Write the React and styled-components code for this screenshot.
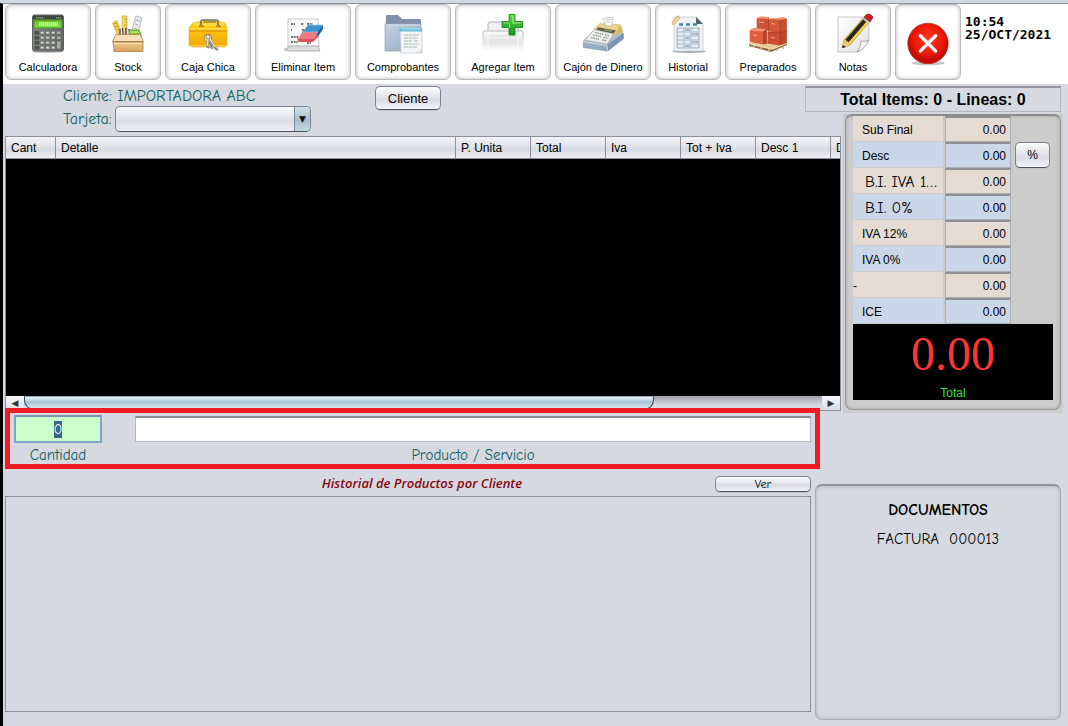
import React, { useState } from 'react'
import styled, { createGlobalStyle } from 'styled-components'

const sans = '"Liberation Sans", Arial, sans-serif'
const comic = '"Comic Sans MS", "Comic Neue", "Open Sans", sans-serif'

const GlobalStyles = createGlobalStyle`
    * {
        box-sizing: border-box;
    }
    body {
        margin: 0;
        background: #d6d9e0;
        font-family: ${sans};
        font-size: 12px;
        color: #000;
    }
    button, input, select {
        font-family: inherit;
        font-size: inherit;
        color: inherit;
    }
`
const Pagina = styled.div`
    display: flex;
    flex-direction: column;
    min-height: 100vh;
    border-top: 3px solid #d3d7e2;
`
const Ventana = styled.div`
    flex: 1;
    display: flex;
    flex-direction: column;
    border-left: 3px solid #000;
    border-top: 1px solid #8d929e;
`
const Barra = styled.header`
    display: flex;
    gap: 4px;
    height: 80px;
    padding-left: 2px;
    background: #fff;
`
const BotonBarra = styled.button`
    display: flex;
    flex-direction: column;
    align-items: center;
    justify-content: ${p => p.$centrado ? 'center' : 'flex-start'};
    gap: 4px;
    width: ${p => p.$ancho}px;
    height: 76px;
    padding: ${p => p.$centrado ? '4px 0 0' : '8px 0 0'};
    border: 1px solid #b9b9b9;
    border-radius: 6px;
    background: #fff;
    box-shadow: inset 0 0 4px #b4b4b4;
    font-size: 11px;
    line-height: 16px;
    white-space: nowrap;
`
const Reloj = styled.time`
    padding: 11px 0 0;
    font: bold 13px/13px "DejaVu Sans Mono", monospace;
`
const Superior = styled.main`
    display: grid;
    grid-template-columns: minmax(0, 1fr) 36px 220px;
    grid-template-rows: 30px 22px 275px;
    padding: 0 7px 0 2px;
`
const Cliente = styled.section`
    grid-column: 1;
    grid-row: 1 / 3;
    display: flex;
    align-items: flex-start;
    padding: 2px 0 0 58px;
    font-family: ${comic};
    font-size: 16px;
    color: #0c6162;
`
const DatosCliente = styled.div`
    width: 248px;
    margin-right: 64px;
`
const Linea = styled.div`
    display: flex;
    align-items: center;
    justify-content: space-between;
    height: ${p => p.$alto}px;
    white-space: nowrap;
`
const Combo = styled.div`
    position: relative;
    width: 196px;
    height: 26px;
    border: 1px solid #7d838f;
    border-bottom-color: #4b525e;
    border-radius: 5px;
    overflow: hidden;
    background: linear-gradient(#f8f9fb, #e3e5ea 45%, #dbdee5 60%, #eef0f4);
`
const Selector = styled.select`
    width: 100%;
    height: 100%;
    border: 0;
    appearance: none;
    background: transparent;
`
const Flecha = styled.span`
    position: absolute;
    top: 0;
    right: 0;
    width: 16px;
    height: 24px;
    border-left: 1px solid #75879b;
    background: linear-gradient(#d3dfe9, #a9bfd1 55%, #c5d5e2);
    color: #111;
    font: 9px/24px "DejaVu Sans", sans-serif;
    text-align: center;
    pointer-events: none;
`
const Boton = styled.button`
    width: ${p => p.$ancho}px;
    height: ${p => p.$alto}px;
    padding: 0;
    border: 1px solid #7d838f;
    border-bottom-color: #4b525e;
    border-radius: 5px;
    background: linear-gradient(#fafbfc, #e4e6eb 45%, #d9dce3 60%, #f4f5f8);
    box-shadow: 0 1px 0 #c0c4cc;
    color: #000;
    font-family: ${p => p.$comic ? comic : sans};
    font-size: ${p => p.$grande ? 13 : 12}px;
    line-height: 1;
`
const TotalItems = styled.h1`
    grid-column: 2 / 4;
    grid-row: 1;
    height: 26px;
    margin: 2px 0 0;
    border: 1px solid #b3b6bd;
    border-top: 2px solid #93969c;
    font: bold 16px/23px ${sans};
    text-align: center;
    white-space: nowrap;
`
const Detalle = styled.section`
    grid-column: 1 / 3;
    grid-row: 3;
    display: flex;
    flex-direction: column;
    border: 1px solid #8b909b;
    background: #000;
`
const Tabla = styled.table`
    width: 100%;
    border-collapse: separate;
    border-spacing: 0;
    table-layout: fixed;
`
const Columna = styled.th`
    width: ${p => p.$ancho ? p.$ancho + 'px' : 'auto'};
    height: 22px;
    padding: 0 0 0 5px;
    overflow: hidden;
    border-right: 1px solid #8b909b;
    border-bottom: 1px solid #8b909b;
    background: linear-gradient(#f3f4f7, #dfe1e7 50%, #d8dbe2 60%, #eceef2);
    font-weight: normal;
    text-align: left;
    white-space: nowrap;
    &:last-child {
        border-right: 0;
    }
`
const BarraScroll = styled.div`
    display: flex;
    height: 14px;
    margin-top: auto;
    background: linear-gradient(#9fa2a9, #d2d5db 60%, #dfe1e6);
`
const BotonScroll = styled.button`
    width: 18px;
    padding: 0;
    border: 0;
    background: linear-gradient(#f5f6f8, #dbdee4);
    color: #333;
    font: 9px/14px "DejaVu Sans", sans-serif;
`
const Pista = styled.div`
    flex: 1;
`
const Deslizador = styled.div`
    width: 79%;
    height: 100%;
    border: 1px solid #2d4257;
    border-top-color: #8fa5b8;
    border-radius: 0 0 10px 10px;
    background: linear-gradient(#f2f7fa, #a9c3d6 40%, #b9cfde 60%, #e4f0f6);
`
const PanelTotales = styled.aside`
    grid-column: 3;
    grid-row: 2 / 4;
    height: 299px;
    padding: 0 2px 2px;
    margin: 0 -2px 0 2px;
    background: #ccc;
`
const Marco = styled.div`
    padding: 0 7px;
    border: 1px solid #9b9b9b;
    border-top: 2px solid #8c8c8c;
    border-radius: 7px;
    box-shadow: inset 0 0 3px #999;
    height: 296px;
`
const FilaTotal = styled.div`
    display: grid;
    grid-template-columns: 90px 66px 35px;
    column-gap: 2px;
    height: 26px;
`
const Etiqueta = styled.label`
    height: 25px;
    padding-left: ${p => p.$margen}px;
    overflow: hidden;
    background: ${p => p.$color};
    font-family: ${p => p.$comic ? comic : sans};
    font-size: ${p => p.$comic ? 16 : 12}px;
    line-height: 28px;
    white-space: nowrap;
    text-overflow: ellipsis;
`
const Valor = styled.input`
    width: 66px;
    height: 26px;
    padding: 0 4px;
    border: 1px solid #acaeb2;
    border-top: 2px solid #8e9095;
    background: ${p => p.$color};
    text-align: right;
`
const Porcentaje = styled.div`
    padding: 0 0 0 2px;
`
const GranTotal = styled.div`
    height: 76px;
    background: #000;
    color: #ff3535;
    font: 48px/60px "Liberation Serif", "Times New Roman", serif;
    text-align: center;
    small {
        display: block;
        color: #2be04b;
        font: 12px/18px ${sans};
    }
`
const Captura = styled.section`
    position: relative;
    display: grid;
    grid-template-columns: 88px minmax(0, 1fr);
    grid-template-rows: 28px 24px;
    column-gap: 33px;
    margin: -3px 248px 0 2px;
    padding: 2px 4px 0;
    height: 61px;
    border: 5px solid #ec1c24;
    background: #d6d9e0;
`
const Campo = styled.input`
    grid-row: 1;
    align-self: center;
    width: 100%;
    height: ${p => p.$activo ? 28 : 26}px;
    border: ${p => p.$activo ? '2px solid #7ea3c7' : '1px solid #b3b5ba'};
    border-top: 2px solid ${p => p.$activo ? '#7694b3' : '#8b8e94'};
    background: ${p => p.$activo ? '#ccffcc' : '#fff'};
    font-family: ${comic};
    font-size: 14px;
    text-align: ${p => p.$activo ? 'center' : 'left'};
    outline: none;
    &::selection {
        background: #39698a;
        color: #fff;
    }
`
const Rotulo = styled.label`
    grid-row: 2;
    font-family: ${comic};
    font-size: 15px;
    line-height: 24px;
    text-align: center;
    color: #0c6162;
`
const Inferior = styled.div`
    flex: 1;
    display: flex;
    gap: 4px;
    padding: 0 7px 6px 2px;
`
const Historial = styled.section`
    flex: 1;
    display: flex;
    flex-direction: column;
    padding: 7px 0 8px;
`
const CabeceraHistorial = styled.div`
    display: flex;
    align-items: flex-start;
    justify-content: flex-end;
    gap: 193px;
    height: 17px;
    margin-bottom: 3px;
`
const TituloHistorial = styled.h2`
    margin: 0;
    color: #85080f;
    font: italic 600 13px/14px "Open Sans", sans-serif;
`
const CajaHistorial = styled.div`
    flex: 1;
    border: 1px solid #8b909b;
`
const Documentos = styled.aside`
    width: 246px;
    margin-top: 15px;
    padding-top: 10px;
    border: 1px solid #aaadb3;
    border-top: 2px solid #8f9298;
    border-radius: 7px;
    box-shadow: inset 0 0 4px #b0b3ba;
    font-family: ${comic};
    text-align: center;
    h2 {
        margin: 0;
        font-size: 16px;
        line-height: 28px;
    }
    p {
        margin: 0;
        font-size: 15px;
        line-height: 30px;
        white-space: pre;
    }
`

const Icono = ({ children, lado = 42 }) => (
    <svg width={lado} height={lado} viewBox="0 0 42 42" aria-hidden="true">{children}</svg>
)

const IconoCalculadora = () => (
    <Icono>
        <defs>
            <linearGradient id="calc" x1="0" x2="1"><stop stopColor="#858a87" /><stop offset="1" stopColor="#636865" /></linearGradient>
            <linearGradient id="lcd" x2="0" y2="1"><stop stopColor="#67bd28" /><stop offset="1" stopColor="#83e04a" /></linearGradient>
        </defs>
        <ellipse cx="21" cy="38.500" rx="16" ry="1.4" fill="#bbb" />
        <rect x="5.500" y="2" width="31" height="36" rx="2" fill="url(#calc)" stroke="#5a605c" />
        <rect x="6" y="2.500" width="30" height="4" fill="#3f4541" />
        <path d="M9 4.800h8M29 4.800h5" stroke="#a5c28f" strokeWidth="1" strokeDasharray="1.500 .5" />
        <rect x="7" y="7" width="28" height="8" fill="url(#lcd)" stroke="#4b9020" />
        <path d="M12 11h19" stroke="#b9ff8a" strokeWidth="4" strokeDasharray="1.500 .5" />
        {[18, 23, 28, 33].map((y, f) => [7.5, 13, 18.5, 24, 29.5].map((x, c) => (
            !(f === 3 && c === 4) && <rect key={x + '-' + y} x={x} y={y} width="4.500" height={f === 2 && c === 4 ? 8 : 3.5} rx=".7" fill={c === 0 ? '#4d5350' : '#a4aaa6'} stroke="#555b57" strokeWidth=".6" />
        )))}
        <path d="M14 19.500h2m3.500 0h2m3.500 0h2m-13 5h2m3.500 0h2m3.500 0h2m-13 5h2m3.500 0h2m3.500 0h2m-13 5h2m3.500 0h2m3.500 0h2" stroke="#dfe3df" strokeWidth="1" />
    </Icono>
)

const IconoStock = () => (
    <Icono>
        <defs><linearGradient id="caja" x2="0" y2="1"><stop stopColor="#efc98b" /><stop offset="1" stopColor="#d9a462" /></linearGradient></defs>
        <path d="M15 3h5v23h-5z" fill="#f7d961" stroke="#d3aa37" strokeWidth=".7" />
        <path d="M17 6h3m-2 3h2m-3 3h3m-2 3h2" stroke="#ad862d" strokeWidth=".7" />
        <path d="M5.500 10l4-2.500 6 13-3.500 4z" fill="#f5cf3f" stroke="#c29a25" strokeWidth=".7" />
        <path d="M7 11l3-1M8 14l3-1M10 17l3-1" stroke="#ae8726" strokeWidth=".8" />
        <path d="M29 3l6 1.500-5 20-7-2z" fill="#e9ecea" stroke="#a5aaa7" strokeWidth=".8" />
        <path d="M29 7l4 1M28 11l3 1M27 15l3 1" stroke="#999f9b" strokeWidth=".8" />
        <path d="M12 16l4-2 3 12h-5z" fill="#eee2f3" />
        <path d="M13 16v8m2.500-9 1 9m2.500-9v9m3-8 1 8" stroke="#4b3558" strokeWidth="1.300" />
        <path d="M22 17h10l2 4v5H22z" fill="#83bb39" stroke="#5b961f" strokeWidth=".7" />
        <path d="M23 18h8l1 2h-9z" fill="#b2dc6a" />
        <path d="M9 21.500h24l3.500 7h-31z" fill="#f6dfbc" stroke="#ad7641" strokeWidth=".7" />
        <path d="M6 28.500h30v10H7z" fill="url(#caja)" stroke="#a56d36" strokeWidth=".7" />
        <path d="M6 29h30" stroke="#b98348" strokeWidth="1" />
        <path d="M7 30.500h28" stroke="#fbe8c9" strokeWidth="1" />
    </Icono>
)

const IconoCajaChica = () => (
    <Icono>
        <defs><linearGradient id="oro" x2="0" y2="1"><stop stopColor="#ffcf13" /><stop offset="1" stopColor="#f2a904" /></linearGradient></defs>
        <path d="M6 10l8-2h17l7 2 2 5v17l-2 2H5l-3-2V15z" fill="url(#oro)" stroke="#e7a407" strokeWidth=".6" />
        <path d="M6 10l8-2h17l7 2-1 3H7z" fill="#ffda3d" />
        <path d="M2 16h38M3 33h36" stroke="#ffe477" strokeWidth="1.200" />
        <path d="M2 18h38" stroke="#cc8909" />
        <path d="M14 12V8q0-1 2-1h13q2 0 2 1v4" fill="none" stroke="#6a6c6c" strokeWidth="1.600" />
        <path d="M16 9h13M12 13h5m12 0h5" stroke="#6b5722" strokeWidth="1.200" />
        <circle cx="21" cy="25" r="4" fill="#f0d681" stroke="#a5822c" strokeWidth=".8" />
        <circle cx="21" cy="24" r="2" fill="#eee" stroke="#777" strokeWidth=".8" />
        <path d="M21 26l-1 7 2 2M23 26l5 9 3 2m-8-8 2 7" fill="none" stroke="#858a8c" strokeWidth="2.200" />
        <path d="M21 26l-1 7M23 26l5 8" stroke="#eceeee" strokeWidth="1.200" />
    </Icono>
)

const IconoEliminar = () => (
    <Icono>
        <path d="M6 6h30l1 28-33 3 2-4z" fill="#fcfcfc" stroke="#b8b8b8" strokeWidth=".8" />
        <path d="M2 36q4 1 5-3h29l2 5H7q-4 0-5-2z" fill="#dedede" stroke="#999" strokeWidth=".7" />
        <path d="M9 11h4m6 0h3m3 0h6M9 17h1m10 0h5M9 24h7M9 29h7m9 1h4" stroke="#4a4a4a" strokeWidth="1.300" strokeDasharray="2 .7" />
        <path d="M26 12h15l-6 9H19z" fill="#3f91ce" />
        <path d="M41 12v4l-6 9-1-4z" fill="#1865a3" />
        <path d="M21 19h15l-5 7H15z" fill="#f27980" />
        <path d="M15 26h16l5-6-1 5-4 4H17z" fill="#d9525c" />
        <path d="M26 12h15M20 19h16" stroke="#89c5eb" strokeWidth=".7" />
    </Icono>
)

const IconoComprobantes = () => (
    <Icono>
        <defs><linearGradient id="carpeta" x2="1" y2="1"><stop stopColor="#c6d4e4" /><stop offset="1" stopColor="#8ea4be" /></linearGradient></defs>
        <path d="M4 3q0-1 1-1h11l4 4h18q1 0 1 1v31H3z" fill="#8192aa" />
        <path d="M3 11h36v27H3z" fill="url(#carpeta)" stroke="#8da0b7" strokeWidth=".7" />
        <path d="M4 12h34" stroke="#dbe4ed" />
        <path d="M18 15h22v25H19z" fill="#f3f5f6" stroke="#bcc7cf" strokeWidth=".7" />
        <path d="M17.500 15h22.500v3.500h-22.500z" fill="#66bde1" />
        <path d="M19 16h20" stroke="#b9ebf7" />
        <path d="M22 22h15m-15 3h14m-14 3h8m2 0h4m-14 3h15m-15 3h13" stroke="#aeb6ba" strokeWidth="1" strokeDasharray="4 .5" />
        <path d="M36 40l4-4v4z" fill="#c0d6e2" />
    </Icono>
)

const IconoAgregar = () => (
    <Icono>
        <defs>
            <linearGradient id="hoja" x2="0" y2="1"><stop stopColor="#f9f9f9" /><stop offset=".6" stopColor="#e6e6e6" /><stop offset="1" stopColor="#fff" /></linearGradient>
            <linearGradient id="borde" x2="0" y2="1"><stop stopColor="#b9b9b9" /><stop offset="1" stopColor="#fff" /></linearGradient>
            <linearGradient id="mas" x2="0" y2="1"><stop stopColor="#63d34c" /><stop offset="1" stopColor="#109719" /></linearGradient>
        </defs>
        <path d="M6 18V11q0-2 2-2h12l2 3h14v6" fill="#f0f0f0" stroke="#b1b1b1" />
        <path d="M1 38V19q0-1 1-1h38q1 0 1 1v19" fill="url(#hoja)" stroke="url(#borde)" />
        <path d="M5 23h31M5 27h31" stroke="#d6d6d6" strokeWidth=".7" />
        <path d="M6 21v17M36 21v17" stroke="#f9f9f9" />
        <path d="M27 1.500h6v7h7.500v6H33v7.500h-6v-7.500h-7v-6h7z" fill="url(#mas)" stroke="#118018" strokeWidth=".8" />
        <path d="M28.500 3h2.500v7h8" fill="none" stroke="#a1ec7d" strokeWidth="1.200" />
        <path d="M21.500 10h6v5" fill="none" stroke="#8bdf6e" />
    </Icono>
)

const IconoCajon = () => (
    <Icono>
        <defs><linearGradient id="gaveta" x2="0" y2="1"><stop stopColor="#c5d3e3" /><stop offset="1" stopColor="#8ea5c0" /></linearGradient></defs>
        <path d="M1.300 28L17 12l24.300 8v6L25.500 38 1.300 34.500z" fill="url(#gaveta)" stroke="#7c92ad" strokeWidth=".6" />
        <path d="M25 32.500L41.300 20v6L25.500 38z" fill="#7d95b2" />
        <path d="M1.300 28.500l23.700 4 .5 5" fill="none" stroke="#e3ebf3" strokeWidth=".8" />
        <path d="M12 16l6-5.500 20.500 1.300 2.200 7.200-9 3.500z" fill="#ead58f" stroke="#c3a956" strokeWidth=".5" />
        <path d="M38.500 12l2.200 7-9 3.500z" fill="#d4b860" />
        <path d="M16 14.300l18 3.200-2.500 3.300-17.500-3.600z" fill="#5d5d42" />
        <path d="M22 16.600l8 1.500" stroke="#8fa06d" strokeWidth="1.200" />
        <path d="M3 27l9.500-10.500L31.500 21 25 31z" fill="#eeeee8" stroke="#a7aaa9" strokeWidth=".5" />
        <path d="M13 19.500l8 1.800M11 22l8 1.800M9 24.500l8 1.800m6-4.500 4.500 1m-6 1.500 4.500 1m-6 1.500 4.500 1" stroke="#858b8e" strokeWidth="1.200" strokeDasharray="1.600 .8" />
        <path d="M20.700 6q5-3 11.300-1-2 1-2.300 8.500l-7-1q1-5-2-6.500z" fill="#f7f8f9" stroke="#a8adb1" strokeWidth=".6" />
        <path d="M24 6.500h5m-4.500 2.500h4" stroke="#b5b9bc" strokeWidth=".7" />
    </Icono>
)

const IconoHistorial = () => (
    <Icono>
        <ellipse cx="22" cy="38.500" rx="17" ry="1.500" fill="#aaa" />
        <path d="M7 4h23l6 7v27H7z" fill="#f0f4f7" stroke="#c0c7cc" strokeWidth=".8" />
        <path d="M29 4v7h7z" fill="#5a6167" />
        <path d="M12 11.500h4m3 0h4m3 0h4" stroke="#4586ad" strokeWidth="2.400" />
        <rect x="10" y="15" width="22" height="20" fill="#e2ebf2" stroke="#8ba2b5" strokeWidth=".8" />
        <path d="M10 19h22M10 23h22M10 27h22M10 31h22M17 15v20M24 15v20" stroke="#9fb2c1" strokeWidth=".8" />
        <path d="M18 17h5m2 4h6m-6 8h6m-13-4h5m-5 8h5" stroke="#7e90a0" strokeWidth="1.200" />
        <path d="M11 3L5.500 9q-1 3 2 2l5-6q0-3-2-1L6.500 9" fill="none" stroke="#e0b878" strokeWidth="1.200" />
    </Icono>
)

const IconoPreparados = () => (
    <Icono>
        <path d="M2 30l12-3 26 4-12 6z" fill="#e6cd9b" />
        <path d="M2 30v3l22 6 16-7v-2.500L25 35.500z" fill="#8b6a41" />
        <path d="M2 30.500l23 5.500 15-6" fill="none" stroke="#f0d9a9" strokeWidth="1.600" />
        <path d="M7 32v3m7-1v3m8-1v3m8-3v2m6-4v2" stroke="#d9bd85" strokeWidth="1.700" />
        <path d="M9.700 5.500l3-1.800 9.300.3v13.500H9.700z" fill="#cf5336" />
        <path d="M9.700 5.500l3-1.800 9.300.3-1 2z" fill="#f0906d" />
        <path d="M21.300 6l16-1.500 2.500 1.200V19L36 20.500l-14.700-2z" fill="#d4583a" />
        <path d="M21.300 6l14-1.800 4.500 1.500L33 7z" fill="#f0906d" />
        <path d="M20.500 19l19.300-1.500V30L32 32.500l-11.500-2z" fill="#cb4e33" />
        <path d="M33 7v25M21.300 6v13M20.500 19.300l12.500.7 6.800-2" fill="none" stroke="#a33a24" strokeWidth=".7" />
        <path d="M33 7l6.800-1.300V30L33 32.500z" fill="#a93a24" opacity=".35" />
        <path d="M3 17.500l4-2.200 12.500.7.300 14.500L16 31 3 28.500z" fill="#df5f40" stroke="#b44329" strokeWidth=".5" />
        <path d="M3 17.500l4-2.200 12.500.7-3.500 2.500z" fill="#f39a77" />
        <path d="M16 18.500l3.500-2.500.3 14.500L16 31z" fill="#b5432b" />
        <path d="M12 9l5 .5M24 10.500l4 .5M6 22l4 .5m14 2 4 .5" stroke="#f5b499" strokeWidth=".9" />
    </Icono>
)

const IconoNotas = () => (
    <Icono>
        <defs><linearGradient id="nota" x2="1" y2="1"><stop stopColor="#fff" /><stop offset="1" stopColor="#e1e1e1" /></linearGradient></defs>
        <path d="M6 4h31v23q-4 9-12 12H6z" fill="url(#nota)" stroke="#b7b7b7" strokeWidth=".8" />
        <path d="M37 27q-3 2-8 1 0 7-4 11 8-3 12-12z" fill="#f8f8f8" stroke="#999" strokeWidth=".8" />
        <path d="M12 27L32 4l6 4-20 24-8 3z" fill="#efc733" stroke="#9d802b" strokeWidth=".7" />
        <path d="M15 28L34 6" stroke="#242420" strokeWidth="4" />
        <path d="M17 31L37 8" stroke="#f5d659" strokeWidth="1.500" />
        <path d="M32 4l2-2q2-2 5 0 3 2 1 4l-2 3z" fill="#ca1c2c" stroke="#930d1b" strokeWidth=".7" />
        <path d="M31 5l6 5" stroke="#c8c9c5" strokeWidth="2" />
        <path d="M12 27l6 5-8 3z" fill="#ecc688" />
        <path d="M11 32l3 2-4 1z" fill="#222" />
    </Icono>
)

const IconoCerrar = () => (
    <Icono lado={46}>
        <defs><radialGradient id="rojo" cy=".4"><stop stopColor="#ff3a1c" /><stop offset=".7" stopColor="#ee1a0a" /><stop offset="1" stopColor="#c40d06" /></radialGradient></defs>
        <ellipse cx="21" cy="38.500" rx="15" ry="2" fill="#c6c6c6" />
        <circle cx="21" cy="20.500" r="18.500" fill="url(#rojo)" stroke="#b8231c" strokeWidth=".6" />
        <path d="M14 13.500l14 14m0-14-14 14" stroke="#fff" strokeWidth="3" strokeLinecap="round" />
    </Icono>
)

const acciones = [
    { nombre: 'Calculadora', ancho: 86, Dibujo: IconoCalculadora },
    { nombre: 'Stock', ancho: 66, Dibujo: IconoStock },
    { nombre: 'Caja Chica', ancho: 86, Dibujo: IconoCajaChica },
    { nombre: 'Eliminar Item', ancho: 96, Dibujo: IconoEliminar },
    { nombre: 'Comprobantes', ancho: 96, Dibujo: IconoComprobantes },
    { nombre: 'Agregar Item', ancho: 96, Dibujo: IconoAgregar },
    { nombre: 'Cajón de Dinero', ancho: 96, Dibujo: IconoCajon },
    { nombre: 'Historial', ancho: 66, Dibujo: IconoHistorial },
    { nombre: 'Preparados', ancho: 86, Dibujo: IconoPreparados },
    { nombre: 'Notas', ancho: 76, Dibujo: IconoNotas },
]

const columnas = [
    ['Cant', 50], ['Detalle', 0], ['P. Unita', 75], ['Total', 75],
    ['Iva', 75], ['Tot + Iva', 75], ['Desc 1', 75], ['D', 9],
]

const totales = [
    { nombre: 'Sub Final', margen: 9 },
    { nombre: 'Desc', margen: 9, boton: true },
    { nombre: 'B.I. IVA 12%', margen: 12, comic: true },
    { nombre: 'B.I. 0%', margen: 12, comic: true },
    { nombre: 'IVA 12%', margen: 9 },
    { nombre: 'IVA 0%', margen: 9 },
    { nombre: '-', margen: 0 },
    { nombre: 'ICE', margen: 9 },
]

export default function PuntoVenta() {
    const [cantidad, setCantidad] = useState('0')
    const [producto, setProducto] = useState('')

    return (
        <Pagina>
            <GlobalStyles />
            <Ventana>
                <Barra>
                    {acciones.map(({ nombre, ancho, Dibujo }) => (
                        <BotonBarra key={nombre} $ancho={ancho}><Dibujo />{nombre}</BotonBarra>
                    ))}
                    <BotonBarra $ancho={66} $centrado aria-label="Cerrar"><IconoCerrar /></BotonBarra>
                    <Reloj>10:54<br />25/OCT/2021</Reloj>
                </Barra>
                <Superior>
                    <Cliente>
                        <DatosCliente>
                            <Linea $alto={20}>Cliente: IMPORTADORA ABC</Linea>
                            <Linea $alto={26}>
                                <label htmlFor="tarjeta">Tarjeta:</label>
                                <Combo>
                                    <Selector id="tarjeta"><option value=""></option></Selector>
                                    <Flecha>▼</Flecha>
                                </Combo>
                            </Linea>
                        </DatosCliente>
                        <Boton $ancho={66} $alto={24} $grande>Cliente</Boton>
                    </Cliente>
                    <TotalItems>Total Items: 0 - Lineas: 0</TotalItems>
                    <Detalle>
                        <Tabla>
                            <thead>
                                <tr>{columnas.map(([nombre, ancho]) => <Columna key={nombre} $ancho={ancho}>{nombre}</Columna>)}</tr>
                            </thead>
                        </Tabla>
                        <BarraScroll>
                            <BotonScroll aria-label="Izquierda">◀</BotonScroll>
                            <Pista><Deslizador /></Pista>
                            <BotonScroll aria-label="Derecha">▶</BotonScroll>
                        </BarraScroll>
                    </Detalle>
                    <PanelTotales>
                        <Marco>
                            {totales.map((t, i) => {
                                const color = i % 2 ? '#cad7e8' : '#e4dbd2'
                                return (
                                    <FilaTotal key={t.nombre}>
                                        <Etiqueta htmlFor={'total' + i} $color={color} $margen={t.margen} $comic={t.comic}>{t.nombre}</Etiqueta>
                                        <Valor id={'total' + i} $color={color} value="0.00" readOnly />
                                        {t.boton && <Porcentaje><Boton $ancho={35} $alto={26}>%</Boton></Porcentaje>}
                                    </FilaTotal>
                                )
                            })}
                            <GranTotal>0.00<small>Total</small></GranTotal>
                        </Marco>
                    </PanelTotales>
                </Superior>
                <Captura>
                    <Campo id="cantidad" $activo autoFocus onFocus={e => e.target.select()} value={cantidad} onChange={e => setCantidad(e.target.value)} />
                    <Rotulo htmlFor="cantidad">Cantidad</Rotulo>
                    <Campo id="producto" value={producto} onChange={e => setProducto(e.target.value)} />
                    <Rotulo htmlFor="producto">Producto / Servicio</Rotulo>
                </Captura>
                <Inferior>
                    <Historial>
                        <CabeceraHistorial>
                            <TituloHistorial>Historial de Productos por Cliente</TituloHistorial>
                            <Boton $ancho={96} $alto={16} $comic>Ver</Boton>
                        </CabeceraHistorial>
                        <CajaHistorial />
                    </Historial>
                    <Documentos>
                        <h2>DOCUMENTOS</h2>
                        <p>FACTURA  000013</p>
                    </Documentos>
                </Inferior>
            </Ventana>
        </Pagina>
    )
}
